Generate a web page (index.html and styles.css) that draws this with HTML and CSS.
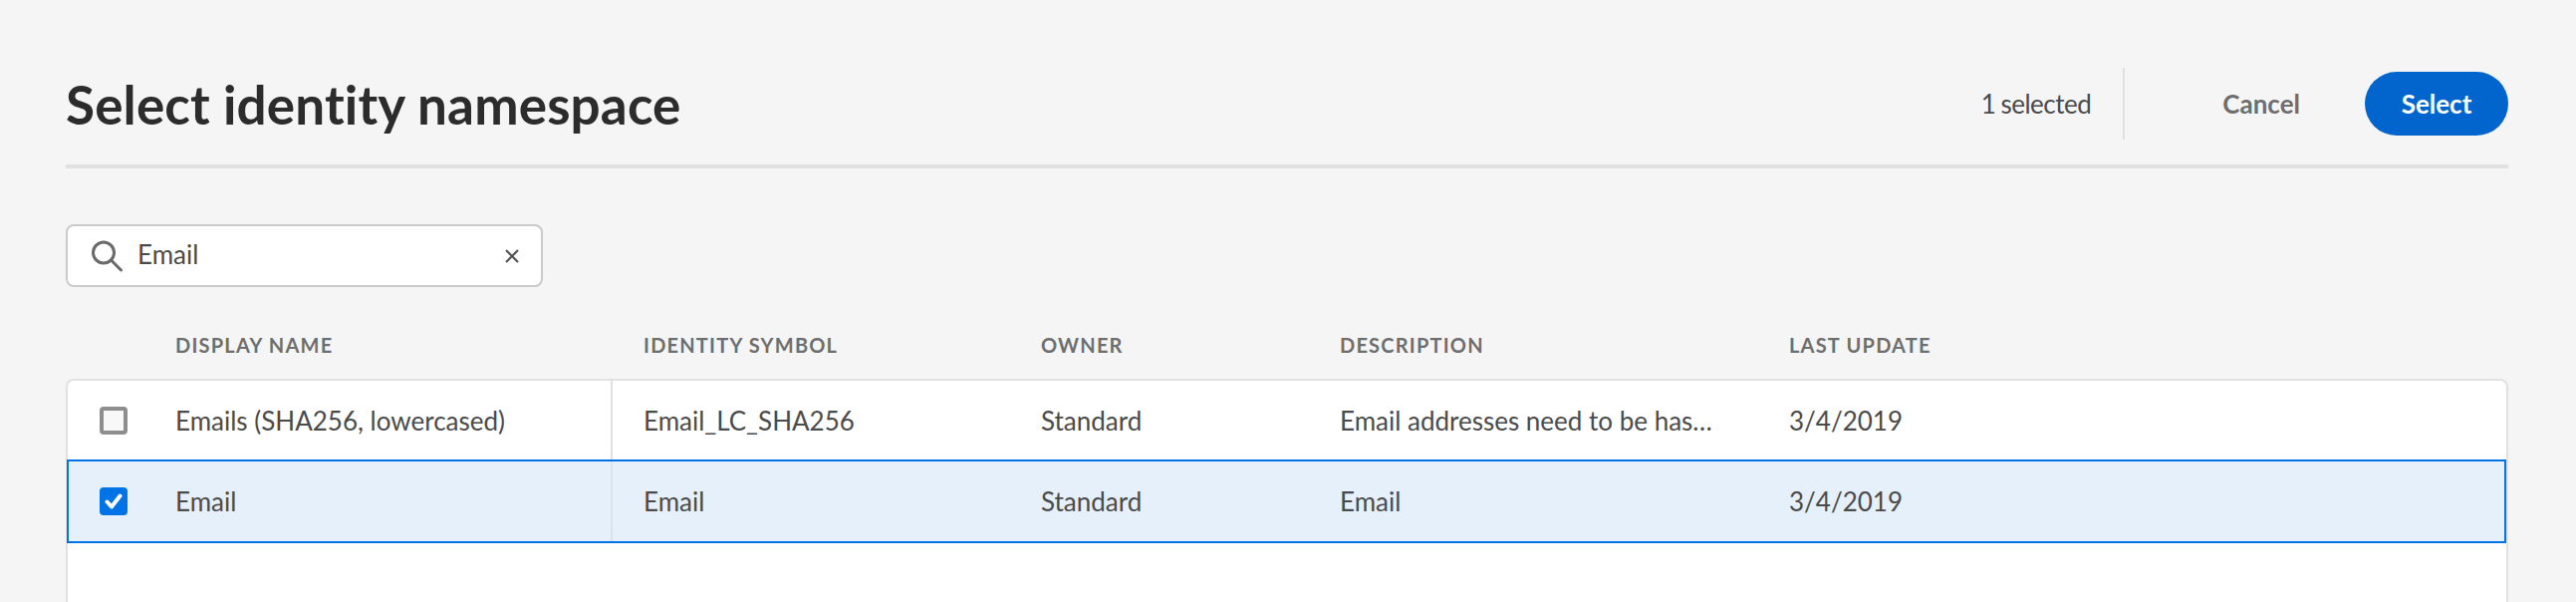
FILE: index.html
```html
<!DOCTYPE html>
<html lang="en">
	<head>
		<meta charset="UTF-8" />
		<meta name="viewport" content="width=device-width, initial-scale=1.0" />
		<title>Select identity namespace</title>
		<link rel="stylesheet" href="styles.css">
	</head>
	<body>
		<div class="dialog-header">
			<h1>Select identity namespace</h1>
			<span class="selected-count">1 selected</span>
			<span class="header-divider"></span>
			<button class="btn-cancel">Cancel</button>
			<button class="btn-select">Select</button>
		</div>

		<div class="search-box">
			<svg class="search-icon" viewBox="0 0 32 32" width="32" height="32" fill="none" stroke="#6a6a6a" stroke-width="3" stroke-linecap="round">
				<circle cx="13" cy="12.5" r="10.5" />
				<path d="M20.5 20l10 10" />
			</svg>
			<span class="search-text">Email</span>
			<svg class="clear-icon" viewBox="0 0 14 14" width="14" height="14" fill="none" stroke="#555" stroke-width="2.2">
				<path d="M1 1l12 12M13 1L1 13" />
			</svg>
		</div>

		<div class="table-row table-head">
			<div></div>
			<div>Display name</div>
			<div class="col-symbol">Identity symbol</div>
			<div>Owner</div>
			<div>Description</div>
			<div>Last update</div>
		</div>

		<div class="table-card">
			<div class="table-row item">
				<div class="cell-check"><span class="checkbox"></span></div>
				<div class="cell-name">Emails (SHA256, lowercased)</div>
				<div class="col-symbol">Email_LC_SHA256</div>
				<div>Standard</div>
				<div>Email addresses need to be has…</div>
				<div>3/4/2019</div>
			</div>
			<div class="table-row item selected">
				<div class="cell-check">
					<span class="checkbox checked">
						<svg viewBox="0 0 28 28" width="28" height="28" fill="none" stroke="#fff" stroke-width="4" stroke-linecap="round" stroke-linejoin="round">
							<path d="M7.5 14.5l4.5 5L20.5 8.5" />
						</svg>
					</span>
				</div>
				<div class="cell-name">Email</div>
				<div class="col-symbol">Email</div>
				<div>Standard</div>
				<div>Email</div>
				<div>3/4/2019</div>
			</div>
		</div>
	</body>
</html>
```

FILE: styles.css
```css
* {
	box-sizing: border-box;
}

html, body {
	height: 100%;
	overflow: hidden;
}

body {
	display: flex;
	flex-direction: column;
	margin: 0;
	padding: 68px 68px 0 66px;
	background-color: #f5f5f5;
	font-family: Lato, "Open Sans", sans-serif;
	font-size: 26px;
	color: #4b4b4b;
}

.dialog-header {
	display: flex;
	flex: none;
	align-items: center;
	height: 101px;
	padding-bottom: 25px;
	border-bottom: 4px solid #e1e1e1;
}

h1 {
	flex: 1;
	margin: 0;
	font-size: 53px;
	font-weight: 700;
	font-variant-ligatures: none;
	letter-spacing: 0.15px;
	color: #2c2c2c;
}

.selected-count {
	margin-right: 32px;
	letter-spacing: -0.5px;
	word-spacing: -1px;
}

.header-divider {
	width: 2px;
	height: 72px;
	background-color: #e1e1e1;
}

button {
	border: none;
	font-family: inherit;
	font-size: 26px;
	font-weight: 700;
	cursor: pointer;
}

.btn-cancel {
	margin: 0 65px 0 98px;
	padding: 0;
	background: none;
	color: #6e6e6e;
}

.btn-select {
	width: 144px;
	height: 64px;
	border-radius: 32px;
	background-color: #0265cd;
	color: white;
}

.search-box {
	display: flex;
	flex: none;
	align-items: center;
	width: 479px;
	height: 63px;
	margin-top: 56px;
	padding: 0 22px 0 23px;
	border: 2px solid #cacaca;
	border-radius: 8px;
	background-color: white;
}

.search-icon {
	flex: none;
}

.search-text {
	flex: 1;
	margin-left: 15px;
	padding-bottom: 3px;
}

.table-row {
	display: grid;
	flex: none;
	grid-template-columns: 108px 439px 430px 300px 451px 1fr;
	align-items: center;
}

.table-head {
	height: 92px;
	padding: 23px 2px 0;
	font-size: 20px;
	font-weight: 700;
	letter-spacing: 1.2px;
	text-transform: uppercase;
	color: #6e6e6e;
}

.col-symbol {
	padding-left: 31px;
}

.table-card {
	flex: 1;
	border: 2px solid #e1e1e1;
	border-bottom: none;
	border-radius: 8px 8px 0 0;
	background-color: white;
}

.item {
	height: 79px;
}

.item > div {
	display: flex;
	align-items: center;
	height: 100%;
}

.cell-check {
	padding-left: 32px;
}

.cell-name {
	border-right: 2px solid #e1e1e1;
}

.selected {
	height: 84px;
	margin-left: -1px;
	padding: 2px 0 2px 1px;
	background-color: #e5f0fa;
	box-shadow: inset 0 0 0 2px #0073e6;
}

.selected .cell-name {
	border-right-color: #dbe3ea;
}

.checkbox {
	display: block;
	width: 28px;
	height: 28px;
	border: 4px solid #8e8e8e;
	border-radius: 4px;
	background-color: #f8f8f8;
}

.checked {
	border: none;
	background-color: #0073e6;
}

.checked svg {
	display: block;
}
```
